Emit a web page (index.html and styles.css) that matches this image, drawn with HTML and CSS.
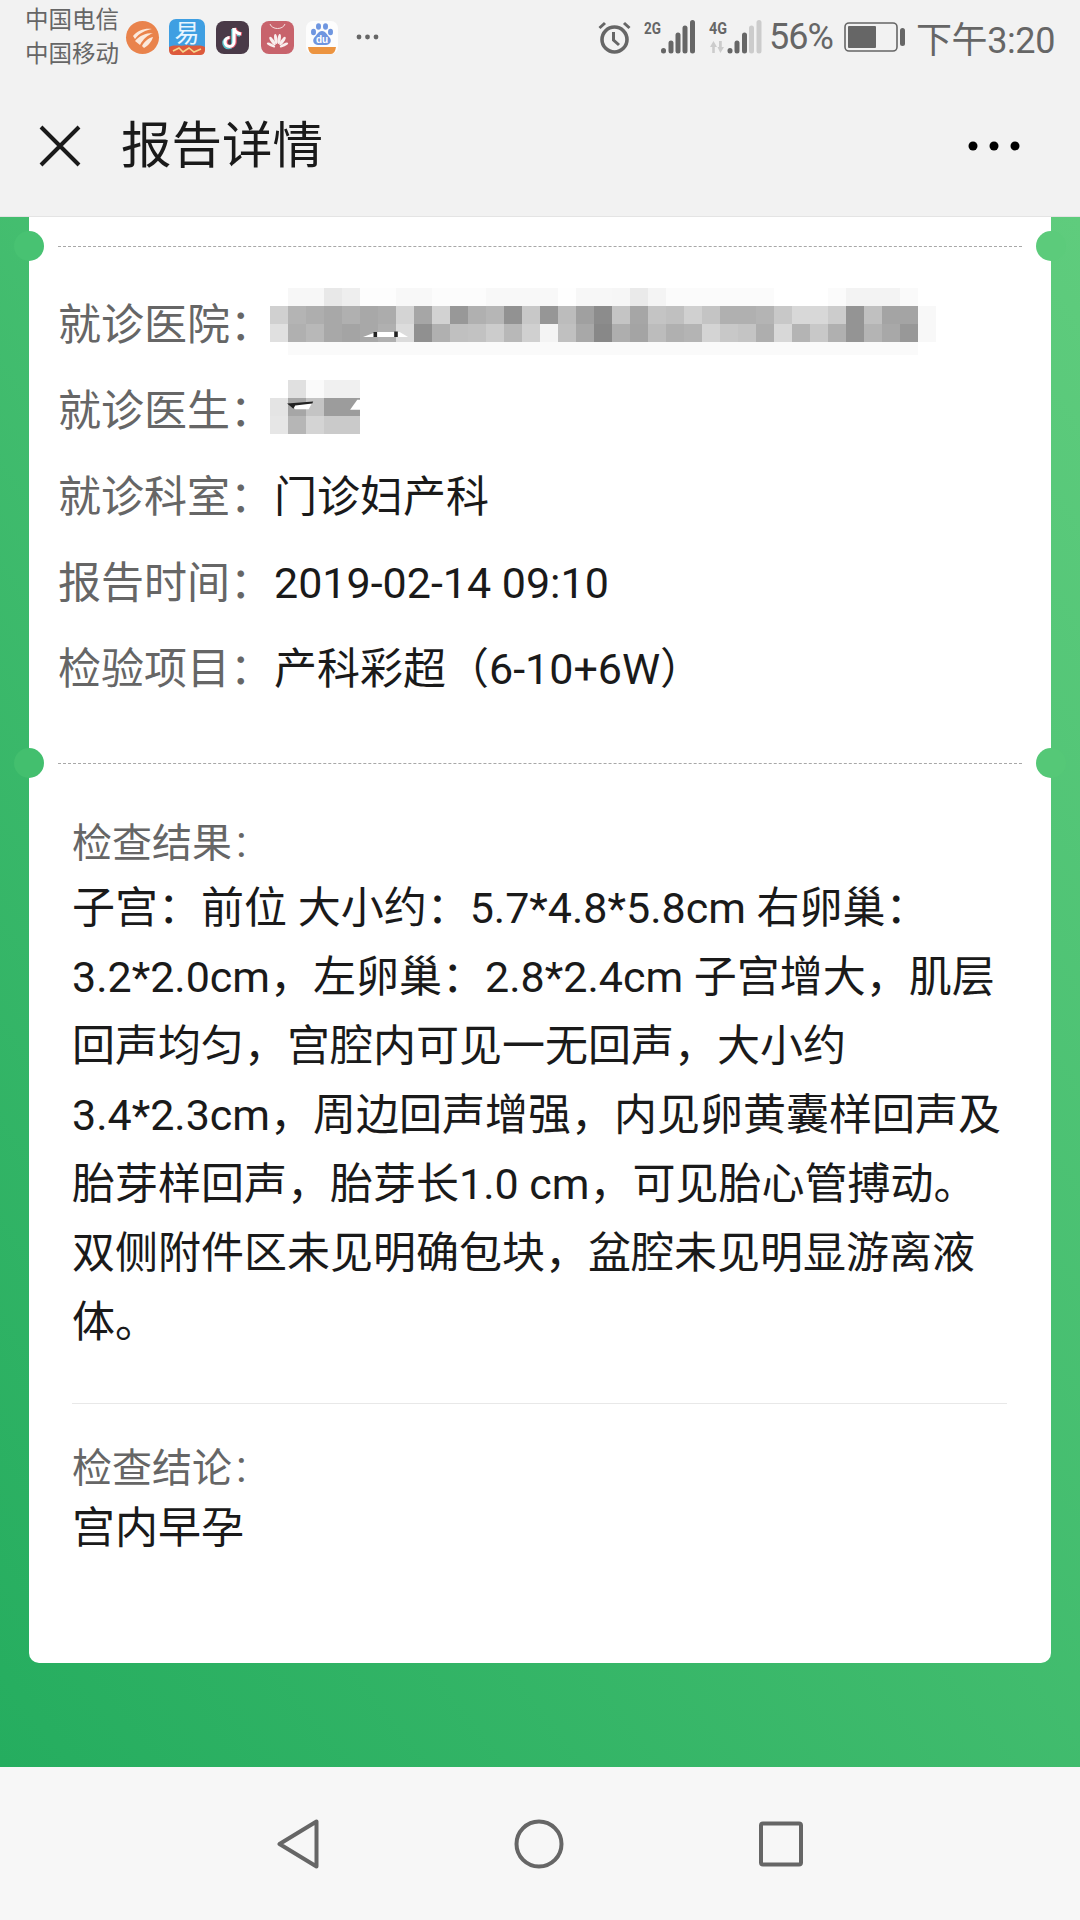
FILE: index.html
```html
<!DOCTYPE html>
<html lang="zh-CN">
<head>
    <meta charset="UTF-8">
    <meta name="viewport" content="width=device-width, initial-scale=1.0">
    <title>报告详情</title>
    <link rel="stylesheet" href="styles.css">
</head>
<body>
<div class="page">
    <div class="statusbar">
        <div class="status-left">
            <div class="carriers">
                <div>中国电信</div>
                <div>中国移动</div>
            </div>
            <svg class="app app-bili" width="33" height="33" viewBox="0 0 33 33">
                <circle cx="16.5" cy="16.5" r="16.5" fill="#e9834c"/>
                <path d="M7 15C12 9 19 7 26 8C20 9 13 12 9 18Z" fill="#fbe9dc"/>
                <path d="M9 20C13 15 19 12 27 12C22 14 17 18 14 24Z" fill="#fbe9dc"/>
                <path d="M16 25C18 21 22 17 27 16C26 20 22 25 18 27Z" fill="#fbe9dc"/>
            </svg>
            <svg class="app app-yi" width="36" height="36" viewBox="0 0 36 36">
                <rect width="36" height="36" rx="7" fill="#3f9fe2"/>
                <text x="18" y="23" text-anchor="middle" font-size="25" fill="#e8f6ff" font-family="Noto Sans CJK SC">易</text>
                <path d="M0 28C6 25 12 28 18 26C24 28 30 25 36 28V31Q36 36 31 36H5Q0 36 0 31Z" fill="#dd5a3c"/>
                <path d="M4 32L10 29L14 33L20 29L25 33L32 30" fill="none" stroke="#f6d58a" stroke-width="1.6"/>
            </svg>
            <svg class="app app-tiktok" width="33" height="33" viewBox="0 0 33 33">
                <rect width="33" height="33" rx="8" fill="#4a3a48"/>
                <path d="M18 7V21A4.5 4.5 0 1 1 13.5 16.5" fill="none" stroke="#58c4ce" stroke-width="3.6" transform="translate(-1 1)"/>
                <path d="M18 7C18.5 10.5 21 12.5 25 13" fill="none" stroke="#58c4ce" stroke-width="3.6" transform="translate(-1 1)"/>
                <path d="M18 7V21A4.5 4.5 0 1 1 13.5 16.5" fill="none" stroke="#e0566a" stroke-width="3.6" transform="translate(1 0)"/>
                <path d="M18 7C18.5 10.5 21 12.5 25 13" fill="none" stroke="#e0566a" stroke-width="3.6" transform="translate(1 0)"/>
                <path d="M18 7V21A4.5 4.5 0 1 1 13.5 16.5" fill="none" stroke="#fff" stroke-width="3.2"/>
                <path d="M18 7C18.5 10.5 21 12.5 25 13" fill="none" stroke="#fff" stroke-width="3.2"/>
            </svg>
            <svg class="app app-huawei" width="33" height="33" viewBox="0 0 33 33">
                <rect width="33" height="33" rx="8" fill="#c8636c"/>
                <path d="M9 3C11 9 22 9 24 3" fill="none" stroke="#f5dfe0" stroke-width="1"/>
                <g fill="#f9eeee">
                    <ellipse cx="14.8" cy="18" rx="1.6" ry="5" transform="rotate(-8 14.8 18)"/>
                    <ellipse cx="18.2" cy="18" rx="1.6" ry="5" transform="rotate(8 18.2 18)"/>
                    <ellipse cx="11.5" cy="20" rx="1.6" ry="5" transform="rotate(-35 11.5 20)"/>
                    <ellipse cx="21.5" cy="20" rx="1.6" ry="5" transform="rotate(35 21.5 20)"/>
                    <ellipse cx="10" cy="24" rx="1.5" ry="4.5" transform="rotate(-65 10 24)"/>
                    <ellipse cx="23" cy="24" rx="1.5" ry="4.5" transform="rotate(65 23 24)"/>
                </g>
            </svg>
            <svg class="app app-baidu" width="32" height="33" viewBox="0 0 32 33">
                <rect width="32" height="33" rx="7" fill="#fdfdfd"/>
                <g fill="#6f96e0">
                    <ellipse cx="7.5" cy="11" rx="2.5" ry="3.2"/>
                    <ellipse cx="12.5" cy="5.5" rx="2.5" ry="3.2"/>
                    <ellipse cx="19.5" cy="5.5" rx="2.5" ry="3.2"/>
                    <ellipse cx="24.5" cy="11" rx="2.5" ry="3.2"/>
                    <path d="M16 10C20 10 21 14 24 17C26 20 24 24 20 24H12C8 24 6 20 8 17C11 14 12 10 16 10Z"/>
                </g>
                <text x="16" y="22" text-anchor="middle" font-size="10" font-weight="bold" fill="#fff" font-family="Liberation Sans">du</text>
                <path d="M2 26H30Q29 33 25 33H7Q3 33 2 26Z" fill="#ec9440"/>
            </svg>
            <svg class="more-apps" width="23" height="6" viewBox="0 0 23 6">
                <circle cx="3" cy="3" r="2.4" fill="#666"/>
                <circle cx="11.5" cy="3" r="2.4" fill="#666"/>
                <circle cx="20" cy="3" r="2.4" fill="#666"/>
            </svg>
        </div>
        <div class="status-right">
            <svg class="alarm" width="33" height="33" viewBox="0 0 33 33">
                <circle cx="16.5" cy="18.5" r="12.5" fill="none" stroke="#666" stroke-width="3.6"/>
                <path d="M15.5 11V19L21 24" fill="none" stroke="#666" stroke-width="3"/>
                <path d="M1.5 7L7 2M31.5 7L26 2" fill="none" stroke="#666" stroke-width="3"/>
            </svg>
            <svg class="signal" width="53" height="34" viewBox="0 0 53 34">
                <text x="0" y="14" font-size="17" font-weight="bold" fill="#666" textLength="17" lengthAdjust="spacingAndGlyphs" font-family="Roboto">2G</text>
                <g stroke="#666" stroke-width="5" stroke-linecap="round">
                    <path d="M19.5 30.5V31"/>
                    <path d="M27 23V31"/>
                    <path d="M34 15V31"/>
                    <path d="M41 8V31"/>
                    <path d="M48.5 2.5V31"/>
                </g>
            </svg>
            <svg class="signal signal-4g" width="54" height="34" viewBox="0 0 54 34">
                <text x="0" y="14" font-size="17" font-weight="bold" fill="#666" textLength="18" lengthAdjust="spacingAndGlyphs" font-family="Roboto">4G</text>
                <path d="M1 27L4.5 21L8 27H5.8V33H3.2V27ZM10 21H12.8V27H15L11.4 33L8.5 27H10Z" fill="#ccc"/>
                <g stroke="#666" stroke-width="5" stroke-linecap="round">
                    <path d="M21 30.5V31"/>
                    <path d="M28 23V31"/>
                    <path d="M35.5 15V31"/>
                </g>
                <g stroke="#ccc" stroke-width="5" stroke-linecap="round">
                    <path d="M42.5 8V31"/>
                    <path d="M50 2.5V31"/>
                </g>
            </svg>
            <span class="battery-pct">56%</span>
            <svg class="battery" width="61" height="30" viewBox="0 0 61 30">
                <rect x="1" y="1" width="52" height="28" rx="4" fill="none" stroke="#666" stroke-width="1.6"/>
                <rect x="4" y="4" width="28" height="22" rx="1" fill="#666"/>
                <rect x="56" y="6" width="5" height="18" rx="2.5" fill="#666"/>
            </svg>
            <span class="clock">下午3:20</span>
        </div>
    </div>

    <div class="titlebar">
        <svg class="close-icon" width="44" height="44" viewBox="0 0 44 44">
            <path d="M3 3L41 41M41 3L3 41" fill="none" stroke="#1a1a1a" stroke-width="4"/>
        </svg>
        <h1 class="title">报告详情</h1>
        <svg class="menu-icon" width="52" height="10" viewBox="0 0 52 10">
            <circle cx="5" cy="5" r="4.5"/>
            <circle cx="26" cy="5" r="4.5"/>
            <circle cx="47" cy="5" r="4.5"/>
        </svg>
    </div>

    <div class="content">
        <div class="card">
            <div class="dash dash-top">
                <span class="notch notch-l notch-top-l"></span>
                <span class="notch notch-r notch-top-r"></span>
            </div>

            <div class="info">
                <div class="info-row">
                    <span class="info-label">就诊医院：</span>
                    <svg class="mosaic" width="666" height="72" viewBox="0 0 37 4" shape-rendering="crispEdges">
                        <rect x="1" y="0" width="2" height="1" fill="#f7f7f7"/><rect x="3" y="0" width="1" height="1" fill="#e8e8e8"/><rect x="4" y="0" width="1" height="1" fill="#eeeeee"/><rect x="5" y="0" width="3" height="1" fill="#fdfdfd"/><rect x="7" y="0" width="2" height="1" fill="#f8f8f8"/><rect x="9" y="0" width="4" height="1" fill="#fcfcfc"/><rect x="12" y="0" width="4" height="1" fill="#f8f8f8"/><rect x="16" y="0" width="1" height="1" fill="#fefefe"/><rect x="17" y="0" width="2" height="1" fill="#f7f7f7"/><rect x="19" y="0" width="1" height="1" fill="#f6f6f6"/><rect x="20" y="0" width="1" height="1" fill="#eaeaea"/><rect x="21" y="0" width="1" height="1" fill="#f4f4f4"/><rect x="22" y="0" width="6" height="1" fill="#fbfbfb"/><rect x="31" y="0" width="1" height="1" fill="#fbfbfb"/><rect x="32" y="0" width="3" height="1" fill="#f3f3f3"/><rect x="35" y="0" width="1" height="1" fill="#fafafa"/>
                        <rect x="0" y="1" width="1" height="1" fill="#d0d0d0"/><rect x="1" y="1" width="1" height="1" fill="#b4b4b4"/><rect x="2" y="1" width="1" height="1" fill="#aeaeae"/><rect x="3" y="1" width="1" height="1" fill="#a8a8a8"/><rect x="4" y="1" width="1" height="1" fill="#b0b0b0"/><rect x="5" y="1" width="1" height="1" fill="#a8a8a8"/><rect x="6" y="1" width="1" height="1" fill="#acacac"/><rect x="7" y="1" width="1" height="1" fill="#d4d4d4"/><rect x="8" y="1" width="1" height="1" fill="#a6a6a6"/><rect x="9" y="1" width="1" height="1" fill="#d2d2d2"/><rect x="10" y="1" width="1" height="1" fill="#989898"/><rect x="11" y="1" width="1" height="1" fill="#b0b0b0"/><rect x="12" y="1" width="1" height="1" fill="#b6b6b6"/><rect x="13" y="1" width="1" height="1" fill="#929292"/><rect x="14" y="1" width="1" height="1" fill="#c8c8c8"/><rect x="15" y="1" width="1" height="1" fill="#969696"/><rect x="16" y="1" width="1" height="1" fill="#bcbcbc"/><rect x="17" y="1" width="1" height="1" fill="#a0a0a0"/><rect x="18" y="1" width="1" height="1" fill="#8c8c8c"/><rect x="19" y="1" width="1" height="1" fill="#c4c4c4"/><rect x="20" y="1" width="1" height="1" fill="#a6a6a6"/><rect x="21" y="1" width="1" height="1" fill="#c4c4c4"/><rect x="22" y="1" width="1" height="1" fill="#c0c0c0"/><rect x="23" y="1" width="1" height="1" fill="#d0d0d0"/><rect x="24" y="1" width="1" height="1" fill="#c4c4c4"/><rect x="25" y="1" width="1" height="1" fill="#b0b0b0"/><rect x="26" y="1" width="1" height="1" fill="#b0b0b0"/><rect x="27" y="1" width="1" height="1" fill="#b4b4b4"/><rect x="28" y="1" width="1" height="1" fill="#c8c8c8"/><rect x="29" y="1" width="1" height="1" fill="#d8d8d8"/><rect x="30" y="1" width="1" height="1" fill="#d8d8d8"/><rect x="31" y="1" width="1" height="1" fill="#cccccc"/><rect x="32" y="1" width="1" height="1" fill="#949494"/><rect x="33" y="1" width="1" height="1" fill="#c0c0c0"/><rect x="34" y="1" width="1" height="1" fill="#a4a4a4"/><rect x="35" y="1" width="1" height="1" fill="#a4a4a4"/><rect x="36" y="1" width="1" height="1" fill="#f8f8f8"/>
                        <rect x="0" y="2" width="1" height="1" fill="#e0e0e0"/><rect x="1" y="2" width="1" height="1" fill="#b0b0b0"/><rect x="2" y="2" width="1" height="1" fill="#b8b8b8"/><rect x="3" y="2" width="1" height="1" fill="#a8a8a8"/><rect x="4" y="2" width="1" height="1" fill="#a4a4a4"/><rect x="5" y="2" width="1" height="1" fill="#a8a8a8"/><rect x="6" y="2" width="1" height="1" fill="#b0b0b0"/><rect x="7" y="2" width="1" height="1" fill="#dcdcdc"/><rect x="8" y="2" width="1" height="1" fill="#909090"/><rect x="9" y="2" width="1" height="1" fill="#b0b0b0"/><rect x="10" y="2" width="1" height="1" fill="#c0c0c0"/><rect x="11" y="2" width="1" height="1" fill="#c2c2c2"/><rect x="12" y="2" width="1" height="1" fill="#cccccc"/><rect x="13" y="2" width="1" height="1" fill="#b8b8b8"/><rect x="14" y="2" width="1" height="1" fill="#d0d0d0"/><rect x="15" y="2" width="1" height="1" fill="#f4f4f4"/><rect x="16" y="2" width="1" height="1" fill="#c0c0c0"/><rect x="17" y="2" width="1" height="1" fill="#a8a8a8"/><rect x="18" y="2" width="1" height="1" fill="#888888"/><rect x="19" y="2" width="1" height="1" fill="#aeaeae"/><rect x="20" y="2" width="1" height="1" fill="#a4a4a4"/><rect x="21" y="2" width="1" height="1" fill="#bcbcbc"/><rect x="22" y="2" width="1" height="1" fill="#b0b0b0"/><rect x="23" y="2" width="1" height="1" fill="#b4b4b4"/><rect x="24" y="2" width="1" height="1" fill="#d4d4d4"/><rect x="25" y="2" width="1" height="1" fill="#c8c8c8"/><rect x="26" y="2" width="1" height="1" fill="#c4c4c4"/><rect x="27" y="2" width="1" height="1" fill="#aeaeae"/><rect x="28" y="2" width="1" height="1" fill="#d8d8d8"/><rect x="29" y="2" width="1" height="1" fill="#b4b4b4"/><rect x="30" y="2" width="1" height="1" fill="#c8c8c8"/><rect x="31" y="2" width="1" height="1" fill="#b0b0b0"/><rect x="32" y="2" width="1" height="1" fill="#949494"/><rect x="33" y="2" width="1" height="1" fill="#b4b4b4"/><rect x="34" y="2" width="1" height="1" fill="#a8a8a8"/><rect x="35" y="2" width="1" height="1" fill="#989898"/><rect x="36" y="2" width="1" height="1" fill="#f8f8f8"/>
                        <rect x="1" y="3" width="35" height="0.7" fill="#fafafa"/>
                        <g shape-rendering="geometricPrecision">
                            <path d="M5.17 2.72L5.9 2.45H7.2L7.67 2.72Z" fill="#fff"/>
                            <path d="M5.75 2.45H5.95V2.72H5.75ZM6.9 2.42H7.1V2.72H6.9Z" fill="#222"/>
                        </g>
                    </svg>
                </div>
                <div class="info-row">
                    <span class="info-label">就诊医生：</span>
                    <svg class="mosaic mosaic-doctor" width="90" height="72" viewBox="0 0 5 4" shape-rendering="crispEdges">
                        <rect x="1" y="0" width="1" height="1" fill="#e0e0e0"/><rect x="2" y="0" width="1" height="1" fill="#fafafa"/><rect x="3" y="0" width="2" height="1" fill="#f0f0f0"/>
                        <rect x="0" y="1" width="1" height="1" fill="#e4e4e4"/><rect x="1" y="1" width="1" height="1" fill="#a6a6a6"/><rect x="2" y="1" width="1" height="1" fill="#c4c4c4"/><rect x="3" y="1" width="2" height="1" fill="#9c9c9c"/>
                        <rect x="0" y="2" width="1" height="1" fill="#e6e6e6"/><rect x="1" y="2" width="1" height="1" fill="#b6b6b6"/><rect x="2" y="2" width="1" height="1" fill="#d4d4d4"/><rect x="3" y="2" width="2" height="1" fill="#cacaca"/>
                        <g shape-rendering="geometricPrecision">
                            <path d="M1.1 1.35L2.35 1.25L2.15 1.62H1.4Z" fill="#fff"/>
                            <path d="M0.95 1.3L2.4 1.2L2.35 1.3L1.4 1.42L1.3 1.6Z" fill="#222"/>
                            <path d="M4.45 1.65L4.85 1.1L5 1.1V1.65Z" fill="#fff"/>
                        </g>
                    </svg>
                </div>
                <div class="info-row">
                    <span class="info-label">就诊科室：</span>
                    <span class="info-value">门诊妇产科</span>
                </div>
                <div class="info-row">
                    <span class="info-label">报告时间：</span>
                    <span class="info-value">2019-02-14 09:10</span>
                </div>
                <div class="info-row">
                    <span class="info-label">检验项目：</span>
                    <span class="info-value">产科彩超（6-10+6W）</span>
                </div>
            </div>

            <div class="dash dash-mid">
                <span class="notch notch-l notch-mid-l"></span>
                <span class="notch notch-r notch-mid-r"></span>
            </div>

            <div class="result">
                <div class="result-label">检查结果<span class="colon">:</span></div>
                <p class="result-text">子宫：前位 大小约：5.7*4.8*5.8cm 右卵巢：3.2*2.0cm，左卵巢：2.8*2.4cm 子宫增大，肌层回声均匀，宫腔内可见一无回声，大小约3.4*2.3cm，周边回声增强，内见卵黄囊样回声及胎芽样回声，胎芽长1.0 cm，可见胎心管搏动。双侧附件区未见明确包块，盆腔未见明显游离液体。</p>
            </div>
            <div class="result result-last">
                <div class="result-label">检查结论<span class="colon">:</span></div>
                <p class="result-text result-short">宫内早孕</p>
            </div>
        </div>
    </div>

    <div class="navbar">
        <svg width="42" height="50" viewBox="0 0 42 50">
            <path d="M39.5 2.5V47.5L2.5 25Z" fill="none" stroke="#666" stroke-width="4" stroke-linejoin="round"/>
        </svg>
        <svg width="50" height="50" viewBox="0 0 50 50">
            <circle cx="25" cy="25" r="22.5" fill="none" stroke="#666" stroke-width="4"/>
        </svg>
        <svg width="44" height="46" viewBox="0 0 44 46">
            <rect x="2" y="2.5" width="40" height="41" rx="2" fill="none" stroke="#666" stroke-width="4"/>
        </svg>
    </div>
</div>
</body>
</html>
```

FILE: styles.css
```css
* {
    box-sizing: border-box;
}

body {
    margin: 0;
    font-family: Roboto, "Noto Sans CJK SC", sans-serif;
    background-color: #f2f2f2;
}

.page {
    display: flex;
    flex-direction: column;
    width: 1080px;
    height: 1920px;
    overflow: hidden;
}

/* status bar */
.statusbar {
    display: flex;
    justify-content: space-between;
    align-items: center;
    height: 74px;
    padding: 0 25px 0 25px;
    color: #666;
}

.statusbar svg {
    overflow: visible;
}

.status-left,
.status-right {
    display: flex;
    align-items: center;
}

.carriers {
    font-size: 23.5px;
    line-height: 34px;
    margin-right: 7px;
}

.app-yi {
    margin-left: 10px;
}

.app-tiktok {
    margin-left: 11px;
}

.app-huawei,
.app-baidu {
    margin-left: 12px;
}

.more-apps {
    margin-left: 18px;
}

.signal {
    margin-left: 13px;
}

.signal-4g {
    margin-left: 12px;
}

.battery-pct {
    width: 64px;
    margin-left: 6px;
    font-size: 36px;
    letter-spacing: -1px;
    white-space: nowrap;
}

.battery {
    margin-left: 11px;
}

.clock {
    margin-left: 11px;
    font-size: 36px;
    letter-spacing: -0.4px;
    white-space: nowrap;
}

/* title */
.titlebar {
    display: flex;
    align-items: center;
    height: 143px;
    padding: 2px 60px 0 38px;
    border-bottom: 1px solid #e4e4e4;
}

.title {
    flex: 1;
    margin: 0 0 0 39px;
    font-size: 50.5px;
    font-weight: 400;
    line-height: 60px;
    color: #1a1a1a;
}

/* content */
.content {
    flex: 1;
    padding: 0 29px;
    background: linear-gradient(52deg, #25ad5f, #5fcc7d);
}

.card {
    height: 1446px;
    padding-top: 29px;
    background-color: #fff;
    border-radius: 0 0 10px 10px;
}

.dash {
    position: relative;
    margin: 0 0 0 29px;
    width: 964px;
    border-top: 1px dashed #a8a8a8;
}

.notch {
    position: absolute;
    width: 30px;
    height: 30px;
    border-radius: 50%;
}

.notch-l {
    left: -44px;
}

.notch-r {
    right: -44px;
}

.dash .notch {
    top: -16px;
}

.notch-top-l {
    background-color: #48c272;
}

.notch-top-r {
    background-color: #5ccb7b;
}

.notch-mid-l {
    background-color: #43bf6e;
}

.notch-mid-r {
    background-color: #55c877;
}

.info {
    padding: 35px 0 0 29px;
    margin-bottom: 51px;
}

.info-row {
    display: flex;
    align-items: baseline;
    height: 86px;
    font-size: 43px;
    line-height: 86px;
}

.info-label {
    width: 216px;
    flex: none;
    color: #666;
}

.info-value {
    color: #1a1a1a;
}

.mosaic {
    align-self: center;
    margin: -2px 0 0 -4px;
}

.mosaic-doctor {
    margin-top: 10px;
}

.result {
    margin: 0 44px 0 43px;
    padding-top: 50px;
    padding-bottom: 46px;
    border-bottom: 1px solid #e8e8e8;
}

.result-last {
    padding-top: 35px;
    padding-bottom: 0;
    border-bottom: 0;
}

.result-label {
    font-size: 40px;
    line-height: 60px;
    color: #666;
}

.colon {
    margin-left: 4px;
    font-size: 44px;
    line-height: 0;
}

.result-text {
    margin: 0;
    font-size: 43px;
    line-height: 69px;
    color: #1a1a1a;
}

.result-short {
    line-height: 58px;
}

/* bottom nav */
.navbar {
    display: flex;
    align-items: center;
    justify-content: center;
    gap: 195px;
    height: 153px;
    background-color: #f7f7f7;
}
```
